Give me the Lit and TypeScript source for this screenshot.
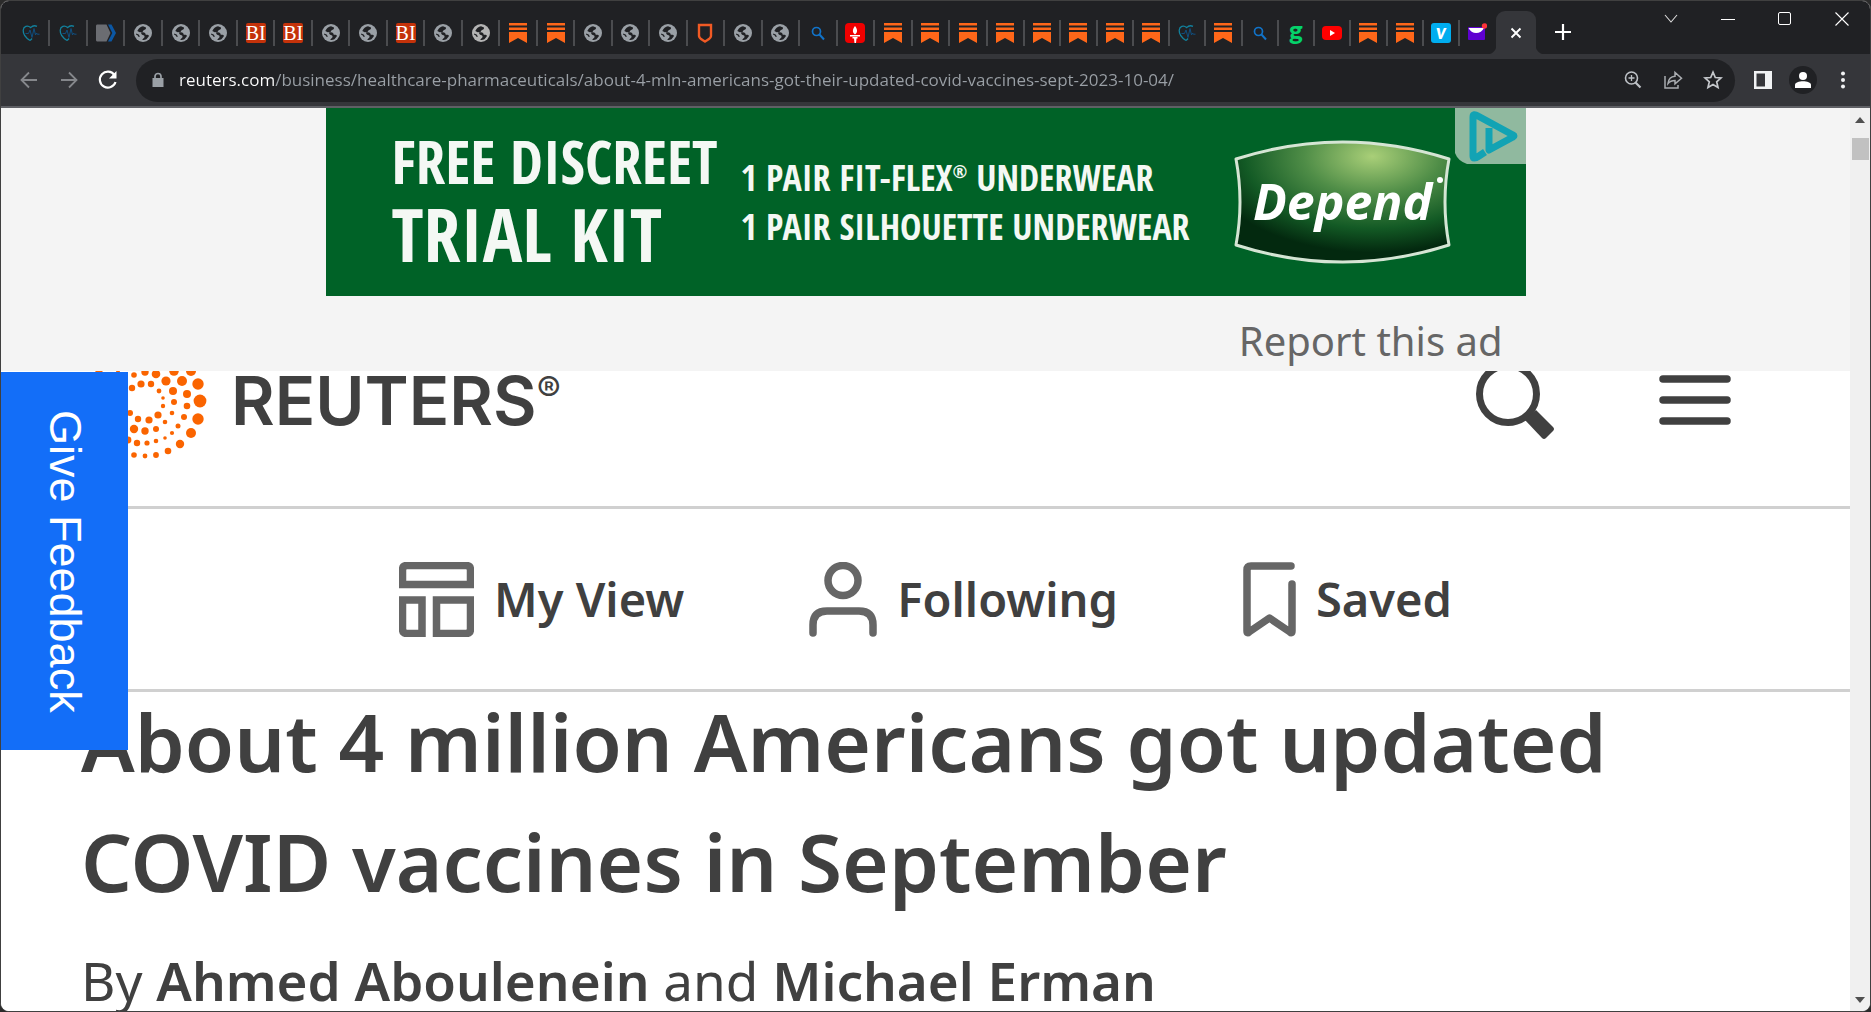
import { LitElement, html, svg, css, TemplateResult } from "lit";
import { customElement, state } from "lit/decorators.js";

type Fav =
  | "heart" | "arrow" | "globe" | "globe-light" | "bi" | "stack" | "shield"
  | "search" | "torch" | "g" | "tube" | "vimeo" | "mail";

const TABS: [Fav, string][] = [
  ["heart", "Heart"], ["heart", "Heart"], ["arrow", "Link"],
  ["globe", "Site"], ["globe", "Site"], ["globe", "Site"],
  ["bi", "BI"], ["bi", "BI"], ["globe", "Site"], ["globe", "Site"], ["bi", "BI"],
  ["globe", "Site"], ["globe-light", "Site"], ["stack", "Newsletter"], ["stack", "Newsletter"],
  ["globe", "Site"], ["globe", "Site"], ["globe", "Site"], ["shield", "Shield"],
  ["globe", "Site"], ["globe", "Site"], ["search", "Search"], ["torch", "Torch"],
  ["stack", "Newsletter"], ["stack", "Newsletter"], ["stack", "Newsletter"], ["stack", "Newsletter"],
  ["stack", "Newsletter"], ["stack", "Newsletter"], ["stack", "Newsletter"], ["stack", "Newsletter"],
  ["heart", "Heart"], ["stack", "Newsletter"], ["search", "Search"], ["g", "G"],
  ["tube", "Video"], ["stack", "Newsletter"], ["stack", "Newsletter"], ["vimeo", "Vimeo"], ["mail", "Mail"],
];

// Dots of the logo as [x, y, radius] on a 124 unit square.
const DOTS: [number, number, number][] = [
  [117, 61, 6.4], [115, 44, 5.7], [108, 31, 5], [115, 79, 5.7], [108, 93, 5], [97, 104, 4.2],
  [85, 111, 3.3], [73, 115, 2.9], [62, 116, 2.4], [51, 115, 2.8],
  [99, 41, 5], [83, 41, 4.6], [104, 54, 4], [104, 66, 3.3], [101, 77, 3], [95, 86, 2.5],
  [89, 93, 2.1], [82, 98, 1.8], [73, 101, 2.3], [64, 103, 2.6], [54, 103, 3.2], [91, 31, 4.8],
  [90, 51, 4], [91, 62, 3], [89, 73, 2.3], [82, 82, 2.3], [73, 89, 3], [62, 91, 3.7], [51, 89, 4.2],
  [73, 34, 4.3], [62, 32, 3.7], [51, 35, 2.8],
  [76, 51, 2.4], [80, 58, 1.8], [80, 66, 2.2], [75, 75, 3.6], [66, 80, 3.6], [55, 79, 3.2],
  [47, 73, 3], [49, 48, 3.2], [58, 44, 3.6], [68, 44, 3.2],
  [16, 28, 5], [35, 31, 2], [45, 100, 3.4],
];

const icon = (size: number, body: unknown, box = 24) =>
  html`<svg width=${size} height=${size} viewBox="0 0 ${box} ${box}" aria-hidden="true">${body}</svg>`;

const globe = (c: string) => icon(20, svg`
  <circle cx="10" cy="10" r="9" fill=${c}></circle>
  <path d="M8.200 9.300h1.800c1.700 0 2.700 1 2.700 2.400h1.800c1.200 0 1.500 1 1.200 1.800l-2.300 2.700c-1.400.9-3.200.9-4.200.600l2.300-2.600c.3-1.900-.6-2-1.800-2.300-1.300-.4-1.800-1.400-1.500-2.600z" fill="#202124"></path>
  <path d="M10 3.300l3 1.200c.3 1.400-.8 2.200-2.200 2.600l-1.300 1.900-2.800.300-2.400-1.300C5.500 5.500 7.500 3.500 10 3.300z" fill="#202124"></path>
  <path d="M3.200 11.200c1.500.200 2.700 1.100 3.100 2.500" fill="none" stroke="#202124" stroke-width="1.300"></path>`, 20);

const FAVS: Record<Fav, () => TemplateResult> = {
  heart: () => icon(20, svg`
    <path d="M9 17.500C4.500 14.500 2 11 2.200 7.200 2.500 3.400 6.500 1.900 9.600 4.600c2-2 4.400-2.200 6.400-1.200" fill="none" stroke="#12809c" stroke-width="1.300"></path>
    <path d="M9 17.500c.8-.6 1.500-1.300 2-2" fill="none" stroke="#12809c" stroke-width="1.300"></path>
    <path d="M4.500 10.500h3l1.500-3.500 2 7.500 2-9 1.500 6.500 1-2 .8 1.200h2.200" fill="none" stroke="#0f4f80" stroke-width="1"></path>`, 20),
  arrow: () => icon(20, svg`
    <path d="M1 1.500h9.500l4 8.500-4 8.500H1q-1-.2-1-1.500v-14q0-1.300 1-1.500z" fill="#6b6d72"></path>
    <path d="M12 1.500h3.500L20 10l-4.500 8.500H12l4.300-8.500z" fill="#0b57a4"></path>`, 20),
  globe: () => globe("#9aa0a6"),
  "globe-light": () => globe("#b4b4b4"),
  bi: () => html`<span class="bi">BI</span>`,
  stack: () => icon(20, svg`<path d="M1 0h18v2.500H1zM1 4.500h18V7H1zM1 9h18v11l-9-5-9 5z" fill="#ff6719"></path>`, 20),
  shield: () => icon(20, svg`<path d="M4 2h12v11c0 2.500-3 3.500-6 5.500-3-2-6-3-6-5.500z" fill="none" stroke="#f15a24" stroke-width="2.400"></path>`, 20),
  search: () => icon(20, svg`<circle cx="8.500" cy="8.500" r="4" fill="none" stroke="#1173c9" stroke-width="1.700"></circle><path d="M11.500 11.500l4.500 5" stroke="#1173c9" stroke-width="2"></path>`, 20),
  torch: () => icon(20, svg`<rect width="20" height="20" rx="4" fill="#f00000"></rect><path d="M10 3c2 2.500 3.500 6 0 8.500C6.500 9 8 5.500 10 3zM5 12h10v1.500H5zM7.500 14h5v1.500h-5zM9 15.500h2.500l-.5 4.500H9.500z" fill="#fff"></path>`, 20),
  g: () => html`<span class="gee">g</span>`,
  tube: () => icon(20, svg`<rect y="3" width="20" height="14" rx="4" fill="#f00"></rect><path d="M8 7l5 3-5 3z" fill="#fff"></path>`, 20),
  vimeo: () => html`<span class="vim">v</span>`,
  mail: () => icon(20, svg`<rect x="1" y="4" width="17" height="13" rx="1" fill="#5f01d1"></rect><path d="M1.500 5h15.500c-1.500 3-4.500 5-7.800 5S3 8 1.500 5z" fill="#fff"></path><circle cx="17.500" cy="3" r="2.700" fill="#ff333a"></circle>`, 20),
};

@customElement("browser-tabs")
class BrowserTabs extends LitElement {
  static styles = css`
    :host { display: flex; height: 54px; background: #202124; }
    button { border: 0; padding: 0; background: none; color: #fff; display: flex; align-items: center; justify-content: center; }
    svg { display: block; }
    .strip { flex: 0 0 80%; display: flex; align-items: flex-end; padding: 0 0 0 12px; box-sizing: border-box; }
    .tab { flex: 29 1 0; height: 26px; margin-bottom: 8px; border-right: 2px solid #4b4c4f; min-width: 0; }
    .tab:nth-child(n + 28) { flex-grow: 28; }
    .tab:nth-last-child(1) { border-right-color: transparent; }
    .active { width: 40px; height: 43px; align-self: flex-end; background: #35363a; border-radius: 9px 9px 0 0; position: relative; }
    .active::before, .active::after { content: ""; position: absolute; bottom: 0; width: 9px; height: 9px; }
    .active::before { right: 100%; background: radial-gradient(circle at 0 0, #202124 9px, #35363a 10px); }
    .active::after { left: 100%; background: radial-gradient(circle at 100% 0, #202124 9px, #35363a 10px); }
    .plus { width: 54px; height: 43px; margin-top: 10px; }
    .controls { margin-left: auto; display: flex; height: 38px; }
    .controls button { width: 57px; }
    .bi { width: 20px; height: 20px; background: #c4320a; font: 20px/20px "Liberation Serif", serif; text-align: center; border-radius: 2px; }
    .gee { font: 900 26px/20px Lato, sans-serif; color: #05d26a; height: 26px; }
    .vim { width: 20px; height: 20px; border-radius: 3px; background: #00adef; font: italic 900 20px/17px Lato, sans-serif; text-align: center; }
  `;
  render() {
    return html`
      <div class="strip" role="tablist">
        ${TABS.map(([f, name]) => html`<button class="tab" role="tab" aria-label=${name}>${FAVS[f]()}</button>`)}
      </div>
      <button class="active" aria-label="Close tab">${icon(12, svg`<path d="M1.500 1.500l9 9M10.500 1.500l-9 9" stroke="#fff" stroke-width="1.900"></path>`, 12)}</button>
      <button class="plus" aria-label="New tab">${icon(16, svg`<path d="M8 0v16M0 8h16" stroke="#fff" stroke-width="2.200"></path>`, 16)}</button>
      <div class="controls">
        <button aria-label="Search tabs">${icon(14, svg`<path d="M1 3l6 7 6-7" fill="none" stroke="#ddd" stroke-width="1.100"></path>`, 14)}</button>
        <button aria-label="Minimize">${icon(14, svg`<path d="M0 7.500h14" stroke="#fff"></path>`, 14)}</button>
        <button aria-label="Maximize">${icon(14, svg`<rect x=".5" y=".5" width="12" height="12" rx="1.500" fill="none" stroke="#fff"></rect>`, 14)}</button>
        <button aria-label="Close">${icon(14, svg`<path d="M.5.5l13 13M13.500.5L.5 13.500" stroke="#fff" stroke-width="1.100"></path>`, 14)}</button>
      </div>`;
  }
}

@customElement("browser-toolbar")
class BrowserToolbar extends LitElement {
  static styles = css`
    :host { display: flex; align-items: center; height: 52px; background: #35363a; border-bottom: 2px solid #5f6065; }
    button { border: 0; padding: 0; background: none; display: flex; align-items: center; justify-content: center; width: 40px; height: 40px; }
    svg { display: block; }
    .nav { display: flex; padding-left: 8px; width: 127px; box-sizing: border-box; justify-content: space-between; }
    .omni { flex: 1; margin-left: 8px; height: 43px; border-radius: 22px; background: #202124; display: flex; align-items: center; padding: 0 2px 0 14px; }
    label { display: flex; width: 16px; margin-right: 13px; }
    input {
      flex: 1; min-width: 0; border: 0; padding: 0; outline: 0; height: 32px; color: #9aa0a6;
      font: 17px/32px "Open Sans", sans-serif;
      background: linear-gradient(to right, #fff 95px, #9aa0a6 95px);
      -webkit-background-clip: text; background-clip: text; -webkit-text-fill-color: transparent;
    }
    .right { display: flex; padding: 0 7px 0 8px; }
  `;
  @state() private url = "reuters.com/business/healthcare-pharmaceuticals/about-4-mln-americans-got-their-updated-covid-vaccines-sept-2023-10-04/";
  render() {
    return html`
      <div class="nav">
        <button aria-label="Back">${icon(18, svg`<path d="M17 9H2M9 1.500L1.500 9 9 16.500" fill="none" stroke="#85878b" stroke-width="1.800"></path>`, 18)}</button>
        <button aria-label="Forward">${icon(18, svg`<path d="M1 9h15M9 1.500L16.500 9 9 16.500" fill="none" stroke="#85878b" stroke-width="1.800"></path>`, 18)}</button>
        <button aria-label="Reload">${icon(20, svg`<path d="M16.400 5A8 8 0 1 0 17.500 12" fill="none" stroke="#fff" stroke-width="2.200"></path><path d="M18.500 1v7.500H11z" fill="#fff"></path>`, 20)}</button>
      </div>
      <div class="omni">
        <label for="url" aria-label="Address">${icon(16, svg`<path d="M2.500 6h11v9h-11z" fill="#9aa0a6"></path><path d="M5 7V4.500a3 3 0 0 1 6 0V7" fill="none" stroke="#9aa0a6" stroke-width="1.700"></path>`, 16)}</label>
        <input id="url" type="text" spellcheck="false" .value=${this.url} />
        <button aria-label="Zoom">${icon(18, svg`<circle cx="7.500" cy="7" r="6" fill="none" stroke="#bdc1c6" stroke-width="1.600"></circle><path d="M7.500 4v6M4.500 7h6" stroke="#bdc1c6" stroke-width="1.300"></path><path d="M11.500 11.500l5 5" stroke="#bdc1c6" stroke-width="2.200"></path>`, 18)}</button>
        <button aria-label="Share">${icon(20, svg`<path d="M2 6v12h13v-3" fill="none" stroke="#a9acb0" stroke-width="1.500"></path><path d="M5 13.500c.5-4.500 3-7 7-7.300V2.500l6.500 5.700-6.500 5.700v-3.500c-3 0-5.300 1-7 3.100z" fill="none" stroke="#a9acb0" stroke-width="1.500"></path>`, 20)}</button>
        <button aria-label="Bookmark">${icon(20, svg`<path d="M10 2.200l2.300 5.300 5.700.5-4.300 3.800 1.300 5.600-5-3-5 3 1.300-5.600L2 8l5.700-.5z" fill="none" stroke="#c4c7cb" stroke-width="1.700"></path>`, 20)}</button>
      </div>
      <div class="right">
        <button aria-label="Side panel">${icon(18, svg`<path fill-rule="evenodd" d="M0 0h18v18H0zM2.500 2.500v13H11v-13z" fill="#f1f3f4"></path>`, 18)}</button>
        <button aria-label="Profile">${icon(28, svg`<circle cx="14" cy="14" r="14" fill="#202124"></circle><circle cx="14" cy="10" r="4" fill="#fff"></circle><path d="M6 22v-3c0-5 16-5 16 0v3z" fill="#fff"></path>`, 28)}</button>
        <button aria-label="Menu">${icon(18, svg`<circle cx="9" cy="2.500" r="2" fill="#f1f3f4"></circle><circle cx="9" cy="9" r="2" fill="#f1f3f4"></circle><circle cx="9" cy="15.500" r="2" fill="#f1f3f4"></circle>`, 18)}</button>
      </div>`;
  }
}

@customElement("ad-banner")
class AdBanner extends LitElement {
  static styles = css`
    :host { display: block; background: #f4f4f4; position: relative; z-index: 1; }
    .banner {
      max-width: 1200px; height: 188px; margin: 0 auto; box-sizing: border-box;
      background: #006227; color: #f4f8f4; display: flex; position: relative; text-decoration: none;
      font-family: "Open Sans Condensed", "Noto Sans Condensed", "Liberation Sans Narrow", "Open Sans", sans-serif;
    }
    .big { width: 349px; padding: 17px 0 0 66px; white-space: nowrap; }
    .free { font-size: 59px; line-height: 72px; font-weight: 300; }
    .trial { font-size: 74px; line-height: 74px; font-weight: 400; }
    .small { padding-top: 45px; font-size: 36px; line-height: 49px; white-space: nowrap; }
    .small sup { font-size: 18px; line-height: 18px; }
    .logo { position: absolute; left: 907px; top: 32px; }
    .choices { position: absolute; right: 0; top: 0; display: block; }
    .report { max-width: 1200px; margin: 0 auto; height: 75px; display: flex; justify-content: flex-end; padding-right: 23px; box-sizing: border-box; }
    .report a { font: 40px/90px "Noto Sans", sans-serif; color: #666; text-decoration: none; }
  `;
  render() {
    return html`
      <a class="banner" href="#ad">
        <div class="big"><div class="free">FREE DISCREET</div><div class="trial">TRIAL KIT</div></div>
        <div class="small"><div><b>1 PAIR FIT-FLEX<sup>®</sup></b> UNDERWEAR</div><div><b>1 PAIR SILHOUETTE</b> UNDERWEAR</div></div>
        <svg class="logo" width="220" height="124" viewBox="0 0 220 124" role="img" aria-label="Depend">
          <defs>
            <radialGradient id="sheen" cx="64%" cy="12%" r="80%">
              <stop offset="0" stop-color="#a9cf78"></stop><stop offset=".4" stop-color="#4f8d47"></stop>
              <stop offset=".75" stop-color="#135a25"></stop><stop offset="1" stop-color="#03290f"></stop>
            </radialGradient>
          </defs>
          <path d="M3 19Q110-15 216 19Q208 62 216 105Q110 139 3 105Q11 62 3 19Z" fill="url(#sheen)" stroke="#d5e5d4" stroke-width="3" stroke-linejoin="round"></path>
          <text x="20" y="80" font-family="Open Sans, sans-serif" font-size="50" font-weight="700" font-style="italic" fill="#fff">Depend</text>
          <circle cx="207" cy="40" r="3" fill="#fff"></circle>
        </svg>
        <svg class="choices" width="71" height="56" viewBox="0 0 71 56" aria-hidden="true">
          <path d="M0 0h71v56H12Q3 53 0 45z" fill="#90b99f"></path>
          <path d="M30 44L24 48Q18 52 18 48V9Q18 5 23 8L58 27Q60 28 58 29L34 42V20" fill="none" stroke="#12a3b4" stroke-width="7" stroke-linejoin="round"></path>
        </svg>
      </a>
      <div class="report"><a href="#report">Report this ad</a></div>`;
  }
}

@customElement("site-header")
class SiteHeader extends LitElement {
  static styles = css`
    :host { display: block; color: #404040; position: relative; }
    svg { display: block; }
    button { border: 0; padding: 0; background: none; display: flex; }
    .top { display: flex; align-items: center; margin-top: -31px; padding: 0 119px 42px 82px; border-bottom: 3px solid #d0d0d0; }
    .brand { display: flex; align-items: center; text-decoration: none; color: #404040; }
    .word { font: 600 67px/80px Inter, sans-serif; margin-left: 24px; padding-bottom: 2px; }
    .reg { font: 400 36px/40px Inter, sans-serif; align-self: flex-start; margin-top: 29px; }
    .tools { margin-left: auto; display: flex; align-items: center; gap: 104px; padding-bottom: 4px; }
    nav { display: flex; justify-content: center; gap: 125px; height: 180px; border-bottom: 3px solid #d0d0d0; }
    nav a { display: flex; align-items: center; gap: 20px; font: 600 47px/60px "Noto Sans", sans-serif; color: #404040; text-decoration: none; }
  `;
  render() {
    return html`
      <div class="top">
        <a class="brand" href="#home">
          <svg width="124" height="124" viewBox="0 0 124 124" aria-hidden="true">${DOTS.map(([x, y, r]) => svg`<circle cx=${x} cy=${y} r=${r} fill="#fa6400"></circle>`)}</svg>
          <span class="word">REUTERS</span><span class="reg">®</span>
        </a>
        <div class="tools">
          <button aria-label="Search"><svg width="80" height="80" viewBox="0 0 80 80"><circle cx="33" cy="34" r="28.500" fill="none" stroke="#404040" stroke-width="7"></circle><path d="M50 60L61 50 78 67Q80 69 78 71L71 78Q69 80 67 78Z" fill="#404040"></path></svg></button>
          <button aria-label="Menu"><svg width="72" height="52" viewBox="0 0 72 52"><path d="M4 5h64M4 26h64M4 47h64" stroke="#404040" stroke-width="7.500" stroke-linecap="round"></path></svg></button>
        </div>
      </div>
      <nav>
        <a href="#view">
          <svg width="75" height="75" viewBox="0 0 75 75"><path d="M8 3.500h59q4.500 0 4.500 4.500v14.500H3.500V8q0-4.500 4.500-4.500zM3.500 38h19.500v33.500H8q-4.500 0-4.500-4.500zM37.500 38h34v29q0 4.500-4.500 4.500H37.500z" fill="none" stroke="#666" stroke-width="7.500"></path></svg>
          My View</a>
        <a href="#following">
          <svg width="68" height="75" viewBox="0 0 68 75"><circle cx="34" cy="18.500" r="15" fill="none" stroke="#666" stroke-width="7.500"></circle><path d="M4 71V63Q4 49 18 49H50Q64 49 64 63V71" fill="none" stroke="#666" stroke-width="7.500" stroke-linecap="round"></path></svg>
          Following</a>
        <a href="#saved">
          <svg width="53" height="75" viewBox="0 0 53 75"><path d="M48 4H8Q4 4 4 8V69Q4 72 6 70L26.500 56 47 70Q49 72 49 69V22" fill="none" stroke="#666" stroke-width="7.500" stroke-linecap="round" stroke-linejoin="round"></path></svg>
          Saved</a>
      </nav>`;
  }
}

@customElement("app-root")
class AppRoot extends LitElement {
  static styles = css`
    :host { display: block; height: 100vh; background: #2b2b2b; overflow: hidden; }
    .frame { height: 100%; box-sizing: border-box; border: 1px solid #404040; border-radius: 9px; overflow: hidden; display: flex; flex-direction: column; background: #fff; }
    browser-tabs, browser-toolbar { flex: none; }
    browser-tabs { margin-top: -1px; }
    .body { flex: 1; min-height: 0; display: flex; }
    main { flex: 1; min-width: 0; overflow: hidden; position: relative; background: #fff; }
    article { padding: 0 80px; color: #404040; font-family: "Noto Sans", sans-serif; }
    h1 { margin: -11px 0 0; font-size: 80px; line-height: 120px; font-weight: 600; max-width: 1600px; }
    .by { margin: 20px 0 0; font-size: 53px; line-height: 80px; }
    .by a { color: #404040; font-weight: 600; text-decoration: none; }
    .feedback {
      position: absolute; left: 0; top: 264px; width: 127px; height: 378px; z-index: 2; border: 0; padding: 0;
      background: #136ef8; color: #fff; writing-mode: vertical-rl; font: 45px/50px "Liberation Sans", sans-serif; text-align: center;
    }
    .scroll { width: 20px; background: #f0f0f0; display: flex; flex-direction: column; align-items: center; padding: 9px 0 8px; box-sizing: border-box; }
    .thumb { width: 17px; height: 22px; margin-top: 15px; margin-bottom: auto; background: #c1c1c1; }
    .scroll svg { display: block; }
  `;
  render() {
    return html`
      <div class="frame">
        <browser-tabs></browser-tabs>
        <browser-toolbar></browser-toolbar>
        <div class="body">
          <main>
            <ad-banner></ad-banner>
            <site-header></site-header>
            <article>
              <h1>About 4 million Americans got updated COVID vaccines in September</h1>
              <p class="by">By <a href="#aboulenein">Ahmed Aboulenein</a> and <a href="#erman">Michael Erman</a></p>
            </article>
            <button class="feedback">Give Feedback</button>
          </main>
          <div class="scroll" aria-hidden="true">
            <svg width="10" height="6" viewBox="0 0 10 6"><path d="M5 0l5 6H0z" fill="#505050"></path></svg>
            <div class="thumb"></div>
            <svg width="10" height="6" viewBox="0 0 10 6"><path d="M5 6l5-6H0z" fill="#505050"></path></svg>
          </div>
        </div>
      </div>`;
  }
}
